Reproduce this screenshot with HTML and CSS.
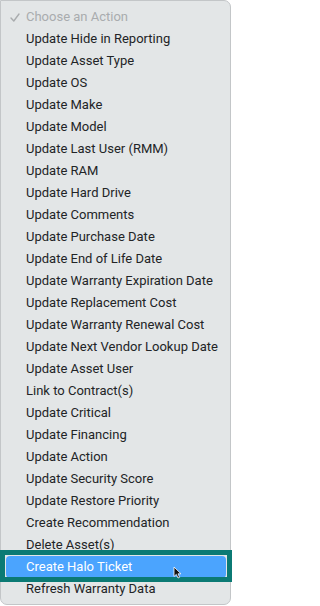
FILE: index.html
```html
<!DOCTYPE html>
<html>
<head>
<meta charset="utf-8">
<link rel="stylesheet" href="styles.css">
</head>
<body>
<div class="menu">
  <div class="item placeholder"><svg class="check" width="10" height="9" viewBox="0 0 10 9"><path d="M1 5 L3.8 8 L9 1" fill="none" stroke="#a9acae" stroke-width="1.4" stroke-linecap="round" stroke-linejoin="round"/></svg>Choose an Action</div>
  <div class="item">Update Hide in Reporting</div>
  <div class="item">Update Asset Type</div>
  <div class="item">Update OS</div>
  <div class="item">Update Make</div>
  <div class="item">Update Model</div>
  <div class="item">Update Last User (RMM)</div>
  <div class="item">Update RAM</div>
  <div class="item">Update Hard Drive</div>
  <div class="item">Update Comments</div>
  <div class="item">Update Purchase Date</div>
  <div class="item">Update End of Life Date</div>
  <div class="item">Update Warranty Expiration Date</div>
  <div class="item">Update Replacement Cost</div>
  <div class="item">Update Warranty Renewal Cost</div>
  <div class="item">Update Next Vendor Lookup Date</div>
  <div class="item">Update Asset User</div>
  <div class="item">Link to Contract(s)</div>
  <div class="item">Update Critical</div>
  <div class="item">Update Financing</div>
  <div class="item">Update Action</div>
  <div class="item">Update Security Score</div>
  <div class="item">Update Restore Priority</div>
  <div class="item">Create Recommendation</div>
  <div class="item">Delete Asset(s)</div>
  <div class="item selected">Create Halo Ticket</div>
  <div class="item">Refresh Warranty Data</div>
</div>
<div class="highlight"></div>
<svg class="cursor" width="9" height="13" viewBox="0 0 9 13"><path d="M1 1 L1 10.5 L3.3 8.4 L5 12 L6.6 11.3 L5 7.8 L8 7.8 Z" fill="#111" stroke="#fff" stroke-width="0.8" stroke-linejoin="round"/></svg>
</body>
</html>
```
FILE: styles.css
```css
html, body {
  margin: 0;
  padding: 0;
  background: #ffffff;
  width: 232px;
  height: 606px;
  overflow: hidden;
}
body {
  position: relative;
  font-family: Roboto, "Liberation Sans", Arial, sans-serif;
  font-size: 13px;
}
.menu {
  box-sizing: border-box;
  width: 231px;
  height: 605px;
  background: #e3e6e7;
  border: 1px solid #c3c6c8;
  border-radius: 0 7px 7px 7px;
  padding-top: 5px;
}
.item {
  height: 22px;
  line-height: 22px;
  padding-left: 25px;
  color: #222426;
  white-space: nowrap;
  position: relative;
}
.placeholder {
  color: #a9acae;
}
.check {
  position: absolute;
  left: 9px;
  top: 7px;
}
.selected {
  margin: 0 4px 0 5px;
  padding-left: 20px;
  background: #4ba4fe;
  color: #ffffff;
  border-radius: 4px;
}
.highlight {
  position: absolute;
  box-sizing: border-box;
  left: 0;
  top: 550px;
  width: 232px;
  height: 32px;
  border: 5px solid #0b7a74;
}
.cursor {
  position: absolute;
  left: 173px;
  top: 566px;
}
```
